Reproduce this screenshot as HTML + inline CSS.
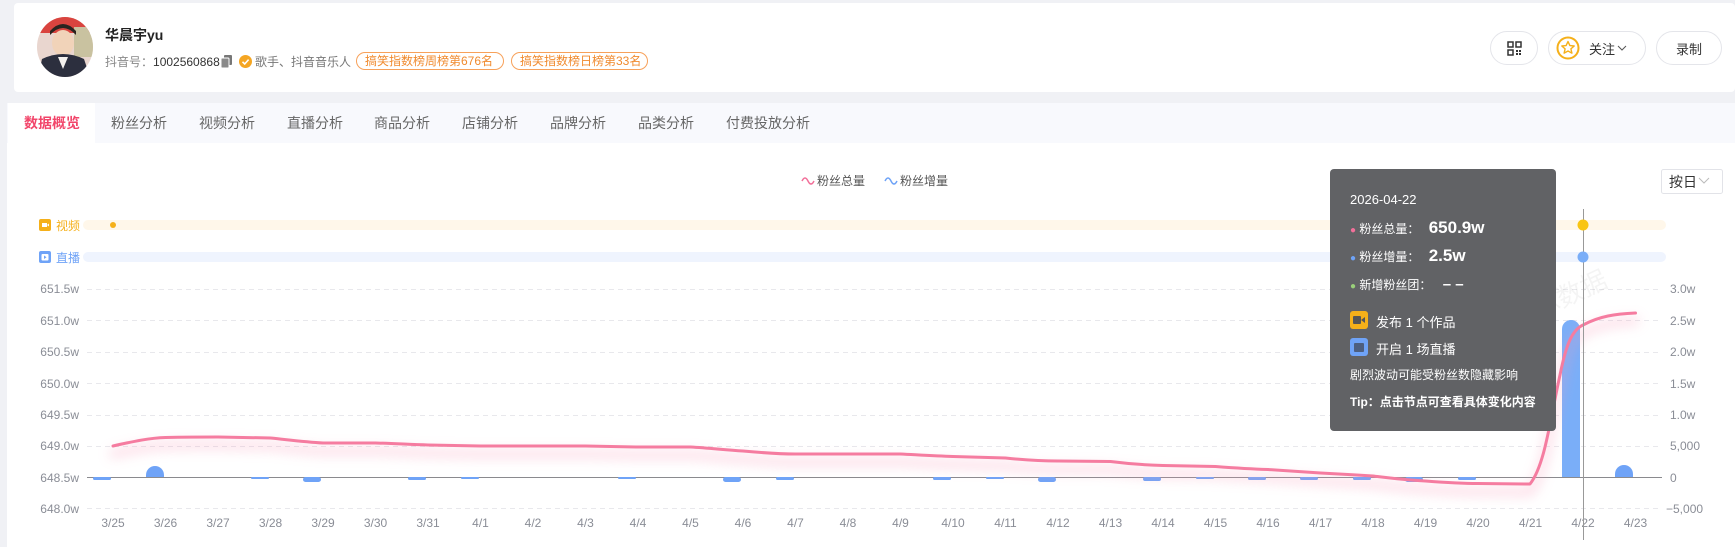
<!DOCTYPE html>
<html><head><meta charset="utf-8"><style>
*{margin:0;padding:0;box-sizing:border-box}
body{width:1735px;height:547px;background:#f0f1f5;font-family:"Liberation Sans","Noto Sans CJK SC",sans-serif;position:relative;overflow:hidden;color:#333}
.abs{position:absolute}
.card{left:14px;top:3px;width:1721px;height:89px;background:#fff;border-radius:4px}
.tag{position:absolute;top:52px;height:18px;border:1px solid #f7a15a;color:#f08a2e;border-radius:9px;font-size:12px;line-height:16px;padding:0 8px;white-space:nowrap}
.btn{position:absolute;top:31px;height:34px;border:1px solid #e4e5ea;border-radius:17px;background:#fff;font-size:13px;color:#333;display:flex;align-items:center;justify-content:center}
.tabs{left:7px;top:103px;width:1728px;height:40px;background:#f8f9fd}
.tab{position:absolute;top:113px;font-size:14px;color:#666;line-height:20px}
.main{left:7px;top:143px;width:1728px;height:404px;background:#fff}
.tt{left:1330px;top:169px;width:226px;height:262px;background:#616265;border-radius:4px;color:#fff;font-size:12px}
.tt div{position:absolute;white-space:nowrap}
</style></head><body>
<div class="abs card"></div>
<svg class="abs" style="left:36px;top:17px" width="58" height="60"><defs><clipPath id="c"><ellipse cx="29" cy="30" rx="28" ry="30"/></clipPath></defs><g clip-path="url(#c)"><rect width="58" height="60" fill="#e9d6cf"/><rect x="0" y="0" width="58" height="16" fill="#d9443f"/><rect x="38" y="10" width="20" height="30" fill="#c9c2a0"/><ellipse cx="27" cy="26" rx="11" ry="13" fill="#f1d3b9"/><path d="M14 18 Q27 4 40 18 L40 14 Q27 0 14 14Z" fill="#2a2420"/><path d="M2 60 L6 42 Q27 32 48 42 L54 60Z" fill="#2c2f3e"/><path d="M22 40 L27 52 L32 40Z" fill="#f4f1ee"/></g></svg>
<div class="abs" style="left:105px;top:25px;font-size:14px;font-weight:bold;color:#222">华晨宇yu</div>
<div class="abs" style="left:105px;top:53px;font-size:12px;color:#888;white-space:nowrap">抖音号：<span style="color:#333">1002560868</span></div>
<svg class="abs" style="left:221px;top:55px" width="12" height="13"><rect x="3" y="0" width="8" height="10" rx="1" fill="#777"/><rect x="0" y="3" width="8" height="10" rx="1" fill="#8a8a8a" stroke="#fff" stroke-width="1"/></svg>
<svg class="abs" style="left:239px;top:55px" width="13" height="13"><circle cx="6.5" cy="6.5" r="6.5" fill="#f5a623"/><path d="M3.5 6.8 L5.7 9 L9.6 4.6" stroke="#fff" stroke-width="1.6" fill="none"/></svg>
<div class="abs" style="left:255px;top:53px;font-size:12px;color:#777">歌手、抖音音乐人</div>
<div class="tag" style="left:356px;width:148px">搞笑指数榜周榜第676名</div>
<div class="tag" style="left:511px;width:137px">搞笑指数榜日榜第33名</div>
<div class="btn" style="left:1490px;width:48px"><svg width="15" height="15"><g fill="none" stroke="#333" stroke-width="1.5"><rect x="1" y="1" width="5" height="5"/><rect x="9" y="1" width="5" height="5"/><rect x="1" y="9" width="5" height="5"/></g><rect x="9" y="9" width="2" height="2" fill="#333"/><rect x="12" y="12" width="2" height="2" fill="#333"/><rect x="12" y="9" width="2" height="2" fill="#333"/><rect x="9" y="12" width="2" height="2" fill="#333"/></svg></div>
<div class="btn" style="left:1548px;width:98px;justify-content:flex-start;padding-left:7px"><svg width="24" height="24"><circle cx="12" cy="12" r="10.5" fill="none" stroke="#f5b01a" stroke-width="2"/><path d="M12 5.5 L13.9 9.6 L18.2 10 L14.9 12.9 L15.9 17.2 L12 15 L8.1 17.2 L9.1 12.9 L5.8 10 L10.1 9.6Z" fill="none" stroke="#f5b01a" stroke-width="1.4" stroke-linejoin="round"/></svg><span style="margin-left:9px">关注</span><svg width="10" height="8" style="margin-left:2px"><path d="M1 2 L5 6 L9 2" stroke="#555" fill="none"/></svg></div>
<div class="btn" style="left:1656px;width:66px">录制</div>
<div class="abs tabs"></div>
<div class="abs" style="left:8px;top:103px;width:87px;height:40px;background:#fff"></div>
<div class="tab" style="left:24px;color:#f2456a;font-weight:bold">数据概览</div>
<div class="tab" style="left:111px">粉丝分析</div>
<div class="tab" style="left:199px">视频分析</div>
<div class="tab" style="left:287px">直播分析</div>
<div class="tab" style="left:374px">商品分析</div>
<div class="tab" style="left:462px">店铺分析</div>
<div class="tab" style="left:550px">品牌分析</div>
<div class="tab" style="left:638px">品类分析</div>
<div class="tab" style="left:726px">付费投放分析</div>
<div class="abs main"></div>
<svg class="abs" style="left:0;top:0" width="1735" height="547" font-family="Liberation Sans, Noto Sans CJK SC, sans-serif">
<defs><filter id="b" x="-5%" y="-50%" width="110%" height="300%"><feGaussianBlur stdDeviation="6"/></filter></defs>
<path d="M802 181 q3 -6 6 0 t6 0" stroke="#f2709a" stroke-width="1.5" fill="none"/>
<text x="817" y="185" font-size="12" fill="#555">粉丝总量</text>
<path d="M885 181 q3 -6 6 0 t6 0" stroke="#6fa3f7" stroke-width="1.5" fill="none"/>
<text x="900" y="185" font-size="12" fill="#555">粉丝增量</text>
<rect x="1661.5" y="169.5" width="61" height="24" rx="2" fill="#fff" stroke="#e2e3e8"/>
<text x="1669" y="187" font-size="14" fill="#333">按日</text>
<path d="M1699 178 L1704 183 L1709 178" stroke="#bbb" fill="none"/>
<rect x="39" y="219" width="12" height="12" rx="2" fill="#f5b01a"/><rect x="42" y="223" width="5" height="4" fill="#fff"/><path d="M47 225 L49 223.5 V226.5Z" fill="#fff"/>
<text x="56" y="230" font-size="12" fill="#f5b01a">视频</text>
<rect x="83" y="220" width="1583" height="10" rx="5" fill="#fff7ea"/>
<circle cx="113" cy="225" r="3" fill="#f5b01a"/>
<rect x="39" y="251" width="12" height="12" rx="2" fill="#6fa3f7"/><rect x="41.5" y="254" width="7" height="6.5" rx="1" fill="#fff"/><path d="M44 255.5 L46.5 257.2 L44 259Z" fill="#6fa3f7"/>
<text x="56" y="262" font-size="12" fill="#6fa3f7">直播</text>
<rect x="83" y="252" width="1583" height="10" rx="5" fill="#eff4fe"/>
<g stroke="#e8e8ec" stroke-dasharray="5,4">
<line x1="87" x2="1662" y1="289.5" y2="289.5"/><line x1="87" x2="1662" y1="320.5" y2="320.5"/><line x1="87" x2="1662" y1="352.5" y2="352.5"/><line x1="87" x2="1662" y1="383.5" y2="383.5"/><line x1="87" x2="1662" y1="415.5" y2="415.5"/><line x1="87" x2="1662" y1="446.5" y2="446.5"/><line x1="87" x2="1662" y1="508.5" y2="508.5"/></g>
<line x1="87" x2="1662" y1="477.5" y2="477.5" stroke="#8a8a8e"/>
<g font-size="12" fill="#8a8d96" text-anchor="end">
<text x="79" y="293">651.5w</text><text x="79" y="325">651.0w</text><text x="79" y="356">650.5w</text><text x="79" y="388">650.0w</text><text x="79" y="419">649.5w</text><text x="79" y="450">649.0w</text><text x="79" y="482">648.5w</text><text x="79" y="513">648.0w</text></g>
<g font-size="12" fill="#8a8d96">
<text x="1670" y="293">3.0w</text><text x="1670" y="325">2.5w</text><text x="1670" y="356">2.0w</text><text x="1670" y="388">1.5w</text><text x="1670" y="419">1.0w</text><text x="1670" y="450">5,000</text><text x="1670" y="482">0</text><text x="1666" y="513">−5,000</text></g>
<g font-size="12" fill="#8a8d96" text-anchor="middle">
<text x="113" y="527">3/25</text><text x="165.5" y="527">3/26</text><text x="218" y="527">3/27</text><text x="270.5" y="527">3/28</text><text x="323" y="527">3/29</text><text x="375.5" y="527">3/30</text><text x="428" y="527">3/31</text><text x="480.5" y="527">4/1</text><text x="533" y="527">4/2</text><text x="585.5" y="527">4/3</text><text x="638" y="527">4/4</text><text x="690.5" y="527">4/5</text><text x="743" y="527">4/6</text><text x="795.5" y="527">4/7</text><text x="848" y="527">4/8</text><text x="900.5" y="527">4/9</text><text x="953" y="527">4/10</text><text x="1005.5" y="527">4/11</text><text x="1058" y="527">4/12</text><text x="1110.5" y="527">4/13</text><text x="1163" y="527">4/14</text><text x="1215.5" y="527">4/15</text><text x="1268" y="527">4/16</text><text x="1320.5" y="527">4/17</text><text x="1373" y="527">4/18</text><text x="1425.5" y="527">4/19</text><text x="1478" y="527">4/20</text><text x="1530.5" y="527">4/21</text><text x="1583" y="527">4/22</text><text x="1635.5" y="527">4/23</text></g>
<g fill="#6fa3f7">
<rect x="93" y="477" width="18" height="3" rx="1.5"/>
<path d="M146 477 V475 a9 9 0 0 1 18 0 V477Z"/>
<rect x="251" y="477" width="18" height="2" rx="1"/>
<rect x="303" y="477" width="18" height="5" rx="2.5"/>
<rect x="408" y="477" width="18" height="3" rx="1.5"/>
<rect x="461" y="477" width="18" height="2" rx="1"/>
<rect x="618" y="477" width="18" height="2" rx="1"/>
<rect x="723" y="477" width="18" height="5" rx="2.5"/>
<rect x="776" y="477" width="18" height="3" rx="1.5"/>
<rect x="933" y="477" width="18" height="3" rx="1.5"/>
<rect x="986" y="477" width="18" height="2" rx="1"/>
<rect x="1038" y="477" width="18" height="5" rx="2.5"/>
<rect x="1143" y="477" width="18" height="4" rx="2"/>
<rect x="1196" y="477" width="18" height="2" rx="1"/>
<rect x="1248" y="477" width="18" height="3" rx="1.5"/>
<rect x="1300" y="477" width="18" height="3" rx="1.5"/>
<rect x="1353" y="477" width="18" height="3" rx="1.5"/>
<rect x="1405" y="477" width="18" height="5" rx="2.5"/>
<rect x="1458" y="477" width="18" height="3" rx="1.5"/>
<path d="M1562 477 V329 a9 9 0 0 1 18 0 V477Z" fill="#7aaef8"/>
<path d="M1615 477 V474 a9 9 0 0 1 18 0 V477Z"/>
</g>
<g fill="none" stroke-linejoin="round" stroke-linecap="round">
<path d="M113 446 C135 441,150 438,165.5 437.5 C190 437,205 437,218 437 L270.5 438 C290 440,305 442,323 443 L375.5 443 C395 443.5,410 444.5,428 445 L480.5 446 L533 446 L585.5 446 L638 447 L690.5 447 C710 448,725 450,743 451 C765 453,780 454,795.5 454 L848 454 L900.5 454 C920 455,935 456,953 456.5 L1005.5 458 C1025 460,1040 461,1058 461 L1110.5 461.5 C1130 464,1145 465,1163 465.5 L1215.5 466.5 C1235 468,1250 469,1268 469.5 L1320.5 473 C1340 474,1355 475,1373 476 C1390 478,1405 480,1425.5 481 C1445 482.5,1460 483.5,1478 483.5 L1530 484 C1545 465,1550 420,1560 375 C1566 345,1572 330,1583 325 C1600 316,1615 314,1635.5 313" stroke="#f79ab8" stroke-width="8" opacity="0.35" filter="url(#b)" transform="translate(0,8)"/>
<path d="M113 446 C135 441,150 438,165.5 437.5 C190 437,205 437,218 437 L270.5 438 C290 440,305 442,323 443 L375.5 443 C395 443.5,410 444.5,428 445 L480.5 446 L533 446 L585.5 446 L638 447 L690.5 447 C710 448,725 450,743 451 C765 453,780 454,795.5 454 L848 454 L900.5 454 C920 455,935 456,953 456.5 L1005.5 458 C1025 460,1040 461,1058 461 L1110.5 461.5 C1130 464,1145 465,1163 465.5 L1215.5 466.5 C1235 468,1250 469,1268 469.5 L1320.5 473 C1340 474,1355 475,1373 476 C1390 478,1405 480,1425.5 481 C1445 482.5,1460 483.5,1478 483.5 L1530 484 C1545 465,1550 420,1560 375 C1566 345,1572 330,1583 325 C1600 316,1615 314,1635.5 313" stroke="#f57ca0" stroke-width="3"/>
</g>
<text x="1515" y="330" font-size="26" fill="#000" opacity="0.04" transform="rotate(-25 1515 330)">灰豚数据</text>
<line x1="1583.5" x2="1583.5" y1="209" y2="540" stroke="#999"/>
<circle cx="1583" cy="225" r="5.5" fill="#f9c513"/>
<circle cx="1583" cy="257" r="5.5" fill="#7aaef8"/>
</svg>
<div class="abs tt">
<div style="left:20px;top:23px;font-size:13px">2026-04-22</div>
<div style="left:20px;top:49px"><span style="color:#f2709a;font-size:10px">●</span> 粉丝总量： <span style="font-size:17px;font-weight:bold;margin-left:6px">650.9w</span></div>
<div style="left:20px;top:77px"><span style="color:#6fa3f7;font-size:10px">●</span> 粉丝增量： <span style="font-size:17px;font-weight:bold;margin-left:6px">2.5w</span></div>
<div style="left:20px;top:107px"><span style="color:#9ad07a;font-size:10px">●</span> 新增粉丝团： <span style="font-weight:bold;margin-left:8px;font-size:15px">– –</span></div>
<div style="left:20px;top:142px;width:18px;height:18px;background:#f5b01a;border-radius:3px"><span style="position:absolute;left:3px;top:5px;width:8px;height:8px;background:#555;border-radius:1px"></span><span style="position:absolute;left:11px;top:6px;width:0;height:0;border-top:3px solid transparent;border-bottom:3px solid transparent;border-right:4px solid #555"></span></div>
<div style="left:46px;top:143px;font-size:13px">发布 1 个作品</div>
<div style="left:20px;top:169px;width:18px;height:18px;background:#6fa3f7;border-radius:3px"><span style="position:absolute;left:4px;top:5px;width:10px;height:9px;background:#4d5f80;border-radius:1px"></span></div>
<div style="left:46px;top:170px;font-size:13px">开启 1 场直播</div>
<div style="left:20px;top:197px">剧烈波动可能受粉丝数隐藏影响</div>
<div style="left:20px;top:224px;font-weight:bold">Tip：点击节点可查看具体变化内容</div>
</div>
</body></html>
